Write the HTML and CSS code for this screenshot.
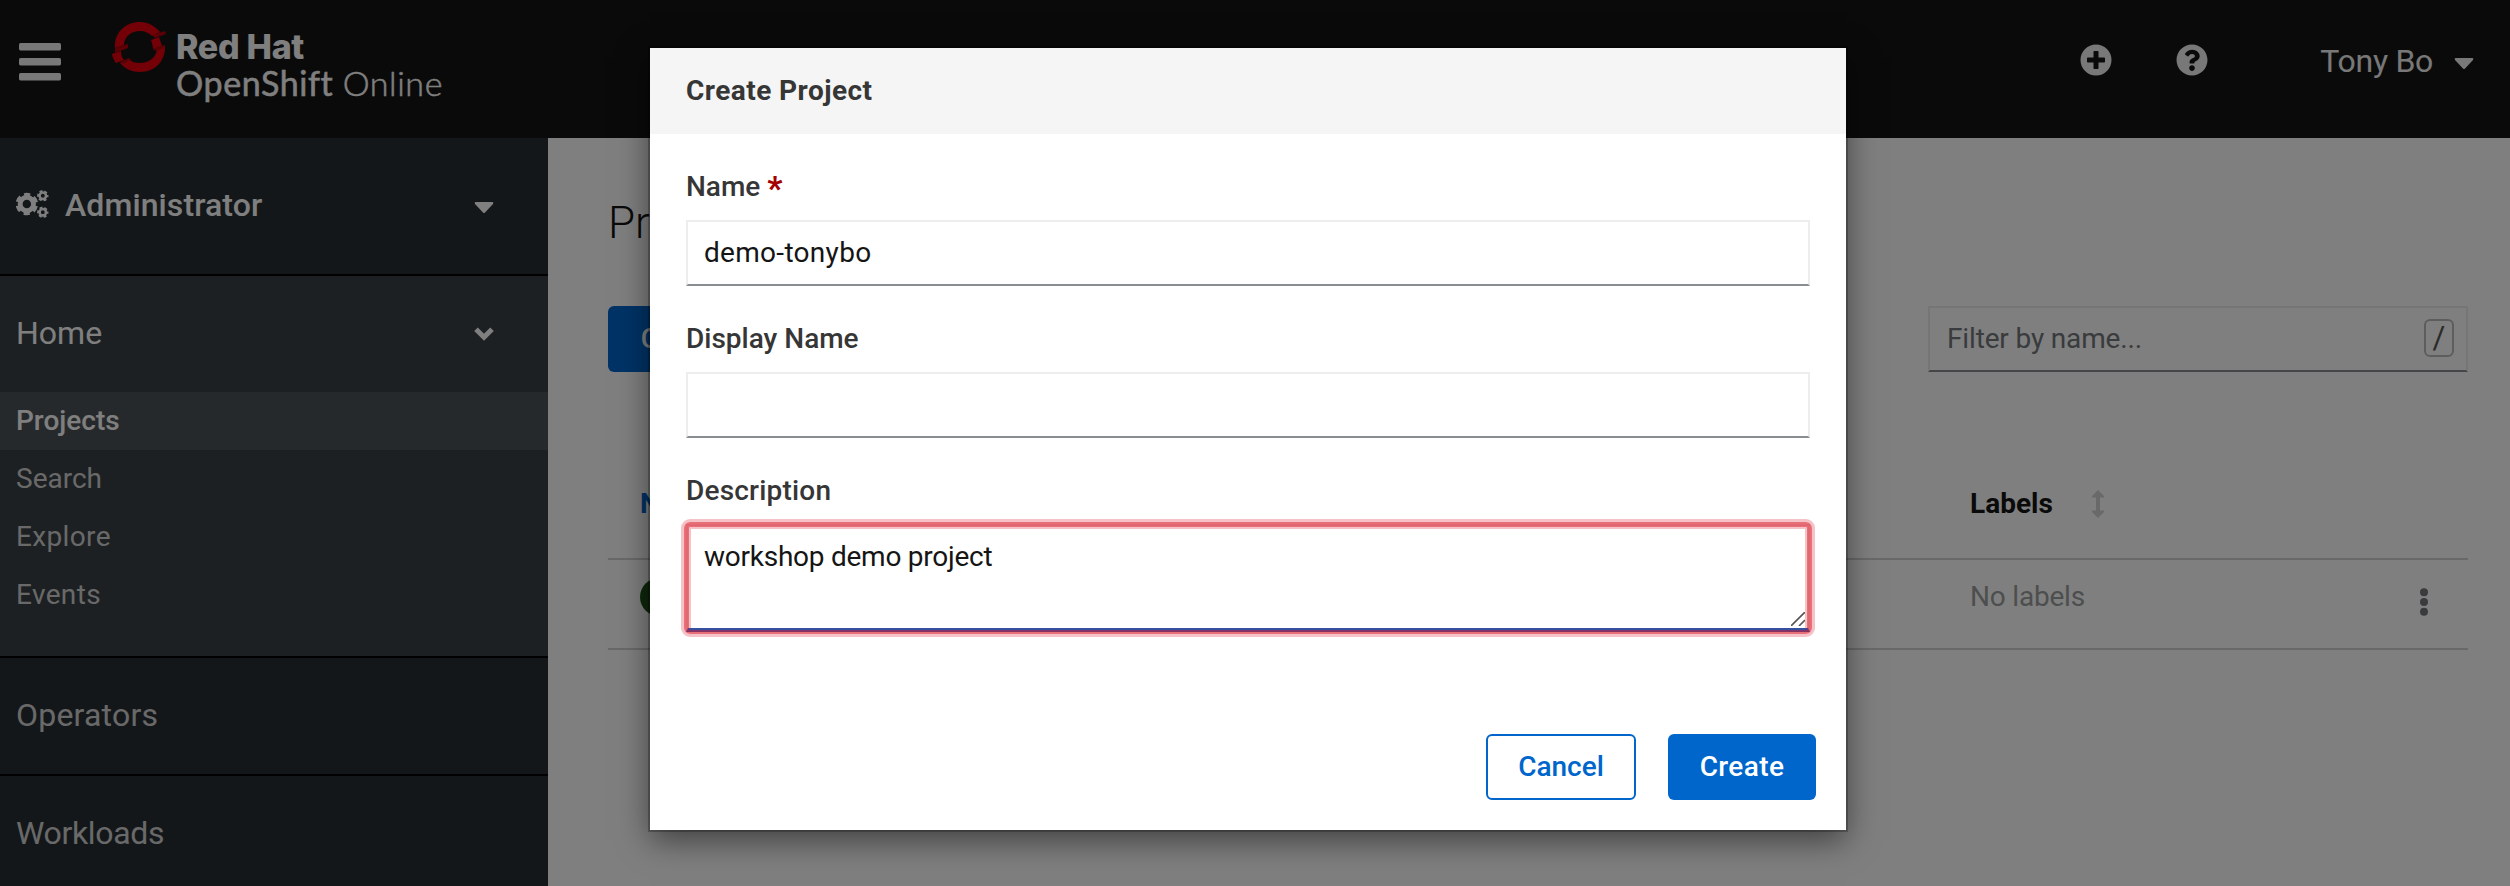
FILE: index.html
```html
<!DOCTYPE html>
<html lang="en">
<head>
<meta charset="utf-8">
<title>Projects · Red Hat OpenShift Online</title>
<link rel="stylesheet" href="styles.css">
</head>
<body>
<div class="app">
  <header class="masthead">
    <svg class="burger" viewBox="0 0 42 38"><rect y="0" width="42" height="7.4" rx="1.6"/><rect y="15" width="42" height="7.4" rx="1.6"/><rect y="30" width="42" height="7.4" rx="1.6"/></svg>
    <div class="brand">
      <svg class="brand-mark" viewBox="0 0 54 50">
        <path fill="#e8000e" d="M3 26C2 10 14 0 28 0C36 0 43 4 48 10L40 14C37 11 33 9 28 9C19 9 12 15 12 23Z"/>
        <path fill="#e8000e" d="M53 23C54 39 43 50 28 50C20 50 13 47 8 41L17 37C20 40 23 41 28 41C37 41 44 35 45 28Z"/>
        <path fill="#e8000e" d="M0 32L9 29C9 33 10 35 12 38L4 41C2 38 0 35 0 32ZM39 18L47 15L50 24L41 27C41 24 40 21 39 18Z"/>
        <path fill="#b8000b" d="M3 26L16 22L16 26L3 31ZM40 13L53 9L54 12L43 16ZM41 27L53 23V26L44 29ZM8 40L17 36L19 38L11 42Z"/>
      </svg>
      <div class="brand-name">
        <div class="brand-top">Red Hat</div>
        <div class="brand-bottom">OpenShift <span class="brand-light">Online</span></div>
      </div>
    </div>
    <div class="tools">
      <svg class="tool-icon" viewBox="0 0 512 512"><path fill-rule="evenodd" d="M256 8a248 248 0 1 0 0 496 248 248 0 0 0 0-496zm144 276c0 7-5 12-12 12h-92v92c0 7-5 12-12 12h-56c-7 0-12-5-12-12v-92h-92c-7 0-12-5-12-12v-56c0-7 5-12 12-12h92v-92c0-7 5-12 12-12h56c7 0 12 5 12 12v92h92c7 0 12 5 12 12v56z"/></svg>
      <svg class="tool-icon" viewBox="0 0 512 512"><path d="M504 256c0 137-111 248-248 248S8 393 8 256C8 119.100 119 8 256 8s248 111.100 248 248zM262.700 90c-54.500 0-89.300 23-116.500 63.800-3.500 5.300-2.400 12.400 2.700 16.300l34.700 26.300c5.200 3.900 12.600 3 16.700-2.100 17.900-22.700 30.100-35.800 57.300-35.800 20.400 0 45.700 13.100 45.700 33 0 15-12.400 22.700-32.500 34C247.100 238.500 216 254.900 216 296v4c0 6.600 5.400 12 12 12h56c6.600 0 12-5.400 12-12v-1.300c0-28.500 83.200-29.600 83.200-106.700 0-58-60.200-102-116.500-102zM256 338c-25.400 0-46 20.600-46 46s20.600 46 46 46 46-20.600 46-46-20.600-46-46-46z"/></svg>
      <div class="user"><span class="user-name">Tony Bo</span><svg class="caret" viewBox="0 0 20 12"><path d="M1.500 0H18.500Q20 .5 19 2L11 10.600Q10 11.600 9 10.600L1 2Q0 .5 1.500 0Z"/></svg></div>
    </div>
  </header>

  <div class="body">
    <nav class="sidebar">
      <div class="perspective">
        <svg class="cogs" viewBox="0 0 64 54">
          <g fill="none" stroke="#fff">
            <circle cx="21" cy="27" r="13" stroke-width="9.500"/><circle cx="21" cy="27" r="18.600" stroke-width="6.500" stroke-dasharray="11.500 7.980" stroke-dashoffset="-4"/>
            <circle cx="52" cy="11" r="6.200" stroke-width="4.800"/><circle cx="52" cy="11" r="9" stroke-width="4" stroke-dasharray="5.600 3.825" stroke-dashoffset="2.800"/>
            <circle cx="52" cy="43" r="6.200" stroke-width="4.800"/><circle cx="52" cy="43" r="9" stroke-width="4" stroke-dasharray="5.600 3.825" stroke-dashoffset="2.800"/>
          </g>
        </svg>
        <span class="perspective-name">Administrator</span>
        <svg class="caret" viewBox="0 0 20 12"><path d="M1.500 0H18.500Q20 .5 19 2L11 10.600Q10 11.600 9 10.600L1 2Q0 .5 1.500 0Z"/></svg>
      </div>
      <section class="nav-open">
        <div class="nav-head"><span>Home</span><svg class="chevron" viewBox="0 0 20 14"><path d="M2 2.200L10 10.300L18 2.200" fill="none" stroke="#fff" stroke-width="5"/></svg></div>
        <ul class="nav-list">
          <li class="nav-item nav-item-current">Projects</li>
          <li class="nav-item">Search</li>
          <li class="nav-item nav-item-explore">Explore</li>
          <li class="nav-item nav-item-explore">Events</li>
        </ul>
      </section>
      <div class="nav-group">Operators</div>
      <div class="nav-group nav-group-tight">Workloads</div>
    </nav>

    <main class="page">
      <h1 class="page-title">Projects</h1>
      <div class="toolbar">
        <button class="btn btn-primary btn-page">Create Project</button>
        <div class="filter"><span class="filter-text">Filter by name...</span><kbd class="key">/</kbd></div>
      </div>
      <div class="table">
        <div class="row row-head">
          <span class="col-name link">Name</span>
          <span class="col-labels">Labels</span>
          <svg class="sort" viewBox="0 0 12 28"><path d="M6 0L12 6V7.500H8V20.500H12V22L6 28L0 22V20.500H4V7.500H0V6Z"/></svg>
        </div>
        <div class="row row-data">
          <span class="col-name"><span class="badge">PR</span></span>
          <span class="col-labels muted">No labels</span>
          <svg class="kebab" viewBox="0 0 8 28"><circle cx="4" cy="4.300" r="4"/><circle cx="4" cy="14" r="4"/><circle cx="4" cy="23.700" r="4"/></svg>
        </div>
      </div>
    </main>
  </div>
</div>

<div class="backdrop">
  <div class="modal">
    <div class="modal-head">Create Project</div>
    <div class="modal-body">
      <div class="label">Name <span class="required">*</span></div>
      <div class="input">demo-tonybo</div>
      <div class="label">Display Name</div>
      <div class="input"></div>
      <div class="label label-wide">Description</div>
      <div class="textarea">workshop demo project
        <svg class="resizer" viewBox="0 0 14 14"><path d="M0 14L14 0M8 14L14 8" fill="none" stroke="#555" stroke-width="1.600"/></svg>
        <div class="ring"><div class="ring-mid"><div class="ring-in"></div></div></div>
      </div>
    </div>
    <div class="modal-foot">
      <button class="btn btn-secondary">Cancel</button>
      <button class="btn btn-primary btn-create">Create</button>
    </div>
  </div>
</div>
</body>
</html>
```
FILE: styles.css
```css
* { box-sizing: border-box; }
body { margin: 0; font-family: Roboto, "Liberation Sans", sans-serif; font-size: 28px; color: #151515; }
.app { width: 2510px; height: 886px; overflow: hidden; display: flex; flex-direction: column; background: #fff; }

.masthead { height: 138px; flex: none; background: #151515; display: flex; align-items: flex-start; padding: 0 36px 0 19px; }
.burger { width: 42px; height: 38px; margin-top: 43px; fill: #f0f0f0; }
.brand { display: flex; margin: 22px 0 0 51px; color: #fff; }
.brand-mark { width: 54px; height: 50px; }
.brand-name { margin: 7px 0 0 10px; white-space: nowrap; }
.brand-top { font: 800 34px/36px Inter, sans-serif; letter-spacing: -0.3px; word-spacing: 0; }
.brand-bottom { font: 400 34px/36px Lato, sans-serif; letter-spacing: 0.6px; -webkit-text-stroke: 0.5px #fff; }
.brand-light { font-weight: 300; }
.tools { margin-left: auto; display: flex; align-items: flex-start; color: #f0f0f0; fill: #f0f0f0; }
.tool-icon { width: 32px; height: 32px; margin: 44px 64px 0 0; }
.user { display: flex; align-items: center; margin: 41px 0 0 48px; gap: 21px; font-size: 32px; line-height: 41px; letter-spacing: -0.3px; }
.caret { width: 20px; height: 12px; fill: #fff; }
.user .caret { fill: #f0f0f0; margin-top: 4px; }

.body { flex: 1; min-height: 0; display: flex; }
.sidebar { width: 548px; flex: none; background: #282f34; color: #fff; font-size: 32px; }
.perspective { height: 138px; display: flex; align-items: flex-start; padding: 47px 54px 0 16px; line-height: 40px; font-weight: 500; border-bottom: 2px solid #030303; }
.cogs { width: 33px; height: 28px; margin: 5px 16px 0 0; }
.perspective-name { letter-spacing: 0.1px; }
.perspective .caret { margin: 17px 0 0 auto; }
.nav-open { height: 382px; background: #394044; border-bottom: 2px solid #030303; }
.nav-head { height: 116px; display: flex; align-items: center; justify-content: space-between; padding: 0 54px 2px 16px; }
.chevron { width: 20px; height: 14px; margin-top: 2px; }
.nav-list { list-style: none; margin: 0; padding: 0; font-size: 28px; color: #d2d2d2; }
.nav-item { height: 58px; line-height: 57px; padding-left: 16px; }
.nav-item-current { background: #4c5356; color: #fff; font-weight: 500; }
.nav-item-explore { letter-spacing: 0.35px; }
.nav-group { height: 118px; line-height: 114px; padding-left: 16px; color: #d2d2d2; border-bottom: 2px solid #030303; letter-spacing: 0.2px; }
.nav-group-tight { letter-spacing: -0.35px; }

.page { flex: 1; min-width: 0; padding: 58px 42px 0 60px; }
.page-title { margin: 0; font-size: 44px; line-height: 54px; font-weight: 300; }
.toolbar { display: flex; justify-content: space-between; margin-top: 56px; }
.btn { height: 66px; border-radius: 6px; font: 500 28px/62px Roboto, sans-serif; padding: 0; border: 0; }
.btn-primary { background: #06c; color: #fff; }
.btn-page { width: 244px; }
.filter { width: 540px; height: 66px; border: 2px solid #ededed; border-bottom-color: #8a8d90; display: flex; align-items: center; justify-content: space-between; padding: 0 12px 2px 17px; color: #72767b; }
.filter-text { letter-spacing: -0.15px; }
.key { width: 30px; height: 38px; border: 2px solid #bbb; border-radius: 6px; font: 31px/33px Roboto, sans-serif; text-align: center; color: #555; }
.table { margin-top: 90px; }
.row { display: grid; grid-template-columns: 1330px 120px 1fr; align-items: start; padding: 0 40px 0 32px; border-bottom: 2px solid #d2d2d2; }
.row-head { height: 98px; padding-top: 22px; line-height: 40px; font-weight: 700; }
.link { color: #06c; }
.row-data { height: 90px; padding-top: 17px; line-height: 40px; }
.muted { color: #9b9c9d; letter-spacing: -0.2px; white-space: nowrap; }
.badge { display: block; width: 58px; height: 38px; margin-top: 1px; border-radius: 19px; background: #1e4f18; color: #fff; text-align: center; line-height: 38px; }
.sort { width: 12px; height: 28px; margin-top: 6px; margin-left: 2px; fill: #d2d2d2; }
.kebab { width: 8px; height: 28px; margin-top: 11px; justify-self: end; fill: #72767b; }

.backdrop { position: absolute; inset: 0; height: 886px; background: rgba(0, 0, 0, 0.5); overflow: hidden; display: flex; align-items: flex-start; padding: 48px 0 0 650px; }
.modal { width: 1196px; height: 782px; background: #fff; box-shadow: 0 0 0 2px rgba(0, 0, 0, 0.24), 0 10px 30px rgba(0, 0, 0, 0.5); display: flex; flex-direction: column; }
.modal-head { height: 86px; padding: 0 36px; line-height: 86px; background: #f5f5f5; font-weight: 700; letter-spacing: 0.45px; color: #363636; }
.modal-body { padding: 32px 36px 0; }
.label { height: 54px; line-height: 42px; font-weight: 500; color: #363636; }
.label-wide { letter-spacing: 0.2px; }
.required { color: #a30000; font-weight: 800; font-size: 33px; line-height: 20px; vertical-align: -4px; }
.input { height: 66px; margin-bottom: 32px; border: 2px solid #ededed; border-bottom-color: #8a8d90; line-height: 62px; padding-left: 16px; letter-spacing: 0.3px; }
.textarea { position: relative; height: 108px; border: 2px solid #ededed; border-bottom: 4px solid #06c; padding: 10px 16px; line-height: 42px; letter-spacing: -0.25px; }
.resizer { position: absolute; right: 3px; bottom: 2px; width: 14px; height: 14px; }
.ring { position: absolute; inset: -7px -7px -9px; border: 3px solid rgba(216, 15, 30, 0.25); border-radius: 9px; }
.ring-mid { height: 100%; border: 5px solid rgba(216, 15, 30, 0.6); border-bottom-width: 4px; border-radius: 6px; }
.ring-in { height: 100%; border: 2px solid rgba(216, 15, 30, 0.25); }
.modal-foot { margin-top: auto; padding: 0 30px 30px; display: flex; justify-content: flex-end; gap: 32px; }
.btn-secondary { width: 150px; background: #fff; color: #06c; border: 2px solid #06c; }
.btn-create { width: 148px; letter-spacing: 0.4px; }
```
